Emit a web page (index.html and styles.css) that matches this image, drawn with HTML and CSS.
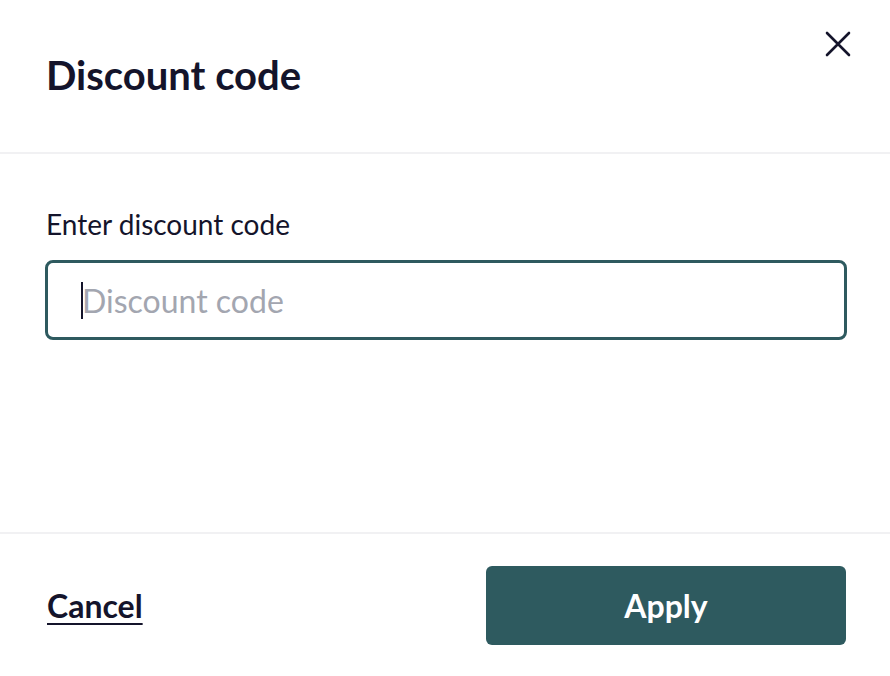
FILE: index.html
```html
<!DOCTYPE html>
<html>
<head>
<meta charset="utf-8">
<link rel="stylesheet" href="styles.css">
</head>
<body>
<div class="modal">
  <header class="head">
    <h1 class="title">Discount code</h1>
    <button class="close" aria-label="Close">
      <svg width="28" height="28" viewBox="0 0 28 28"><path d="M3 3 L25 25 M25 3 L3 25" stroke="#14142b" stroke-width="2.6" stroke-linecap="round" fill="none"/></svg>
    </button>
  </header>
  <main class="body">
    <label class="label">Enter discount code</label>
    <div class="input"><span class="caret"></span><span class="ph">Discount code</span></div>
  </main>
  <footer class="foot">
    <a class="cancel" href="#">Cancel</a>
    <button class="apply">Apply</button>
  </footer>
</div>
</body>
</html>
```
FILE: styles.css
```css
html, body { margin: 0; padding: 0; background: #fff; }
body { font-family: Lato, "Noto Sans", sans-serif; color: #14142b; }
.modal { width: 890px; height: 676px; display: flex; flex-direction: column; }
.head { height: 154px; box-sizing: border-box; border-bottom: 2px solid #f1f1f3; display: flex; justify-content: space-between; padding: 0 38px 0 46px; }
.title { margin: 50px 0 0; font-size: 40px; font-weight: 700; line-height: 50px; }
.close { background: none; border: 0; padding: 0; margin-top: 30px; width: 28px; height: 28px; cursor: pointer; }
.close svg { display: block; }
.body { flex: 1; padding: 0 43px 0 45px; display: flex; flex-direction: column; }
.label { font-size: 28px; line-height: 34px; margin: 53px 0 0 1px; }
.input { margin-top: 19px; height: 80px; box-sizing: border-box; border: 3px solid #2e5a5f; border-radius: 8px; display: flex; align-items: center; padding-left: 33px; }
.caret { width: 2px; height: 37px; background: #14142b; }
.ph { font-size: 32px; color: #a3a6b0; margin-left: -1px; }
.foot { height: 144px; box-sizing: border-box; border-top: 2px solid #f1f1f3; display: flex; align-items: center; justify-content: space-between; padding: 0 44px 0 47px; }
.cancel { color: #14142b; font-size: 32px; font-weight: 700; text-decoration: underline; text-decoration-thickness: 2px; text-underline-offset: 5px; }
.apply { width: 360px; height: 79px; background: #2e5a5f; color: #fff; border: 0; border-radius: 6px; font-family: Lato, sans-serif; font-size: 32px; font-weight: 700; }
```
